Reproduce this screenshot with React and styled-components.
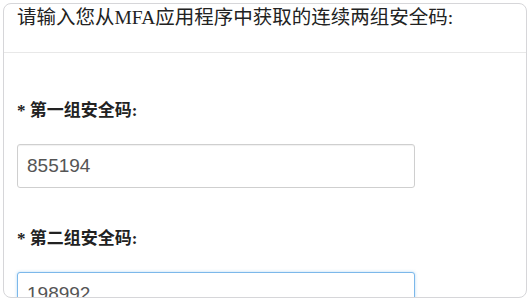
import React from 'react';
import styled, { createGlobalStyle } from 'styled-components';

const GlobalStyle = createGlobalStyle`
    body {
        margin: 0;
        background: #fff;
        font-family: "Liberation Serif", "Noto Sans CJK SC", serif;
    }
`

const Panel = styled.div`
    margin: 3px;
    width: 524px;
    height: 295px;
    box-sizing: border-box;
    border: 1px solid #d6d6d9;
    border-radius: 8px;
    overflow: hidden;
    background: #fff;
`
const Heading = styled.div`
    height: 49px;
    padding: 2px 13px 0;
    box-sizing: border-box;
    border-bottom: 1px solid #e8e8e8;
    font-size: 19.5px;
    line-height: 24px;
    color: #222;
`
const Body = styled.div`
    padding: 48px 13px 0;
`
const FormGroup = styled.div`
    margin-bottom: 41px;
`
const Label = styled.label`
    display: block;
    margin-bottom: 23px;
    font-size: 17px;
    line-height: 20px;
    font-weight: bold;
    color: #222;
`
const Input = styled.input`
    display: block;
    width: 398px;
    height: 44px;
    box-sizing: border-box;
    padding: 0 9px;
    border: 1px solid ${props => props.$focused ? '#7cb8ea' : '#cfcfcf'};
    border-radius: 3px;
    box-shadow: ${props => props.$focused ? '0 0 3px rgba(102, 175, 233, 0.5)' : 'inset 0 1px 1px rgba(0,0,0,0.06)'};
    font-family: "Liberation Sans", "Noto Sans", sans-serif;
    font-size: 19px;
    color: #555;
    outline: none;
    background: #fff;
`

export default function App() {
    return (
        <>
            <GlobalStyle />
            <Panel>
                <Heading>请输入您从MFA应用程序中获取的连续两组安全码:</Heading>
                <Body>
                    <FormGroup>
                        <Label>* 第一组安全码:</Label>
                        <Input defaultValue="855194" readOnly />
                    </FormGroup>
                    <FormGroup>
                        <Label>* 第二组安全码:</Label>
                        <Input defaultValue="198992" readOnly $focused />
                    </FormGroup>
                </Body>
            </Panel>
        </>
    )
}
